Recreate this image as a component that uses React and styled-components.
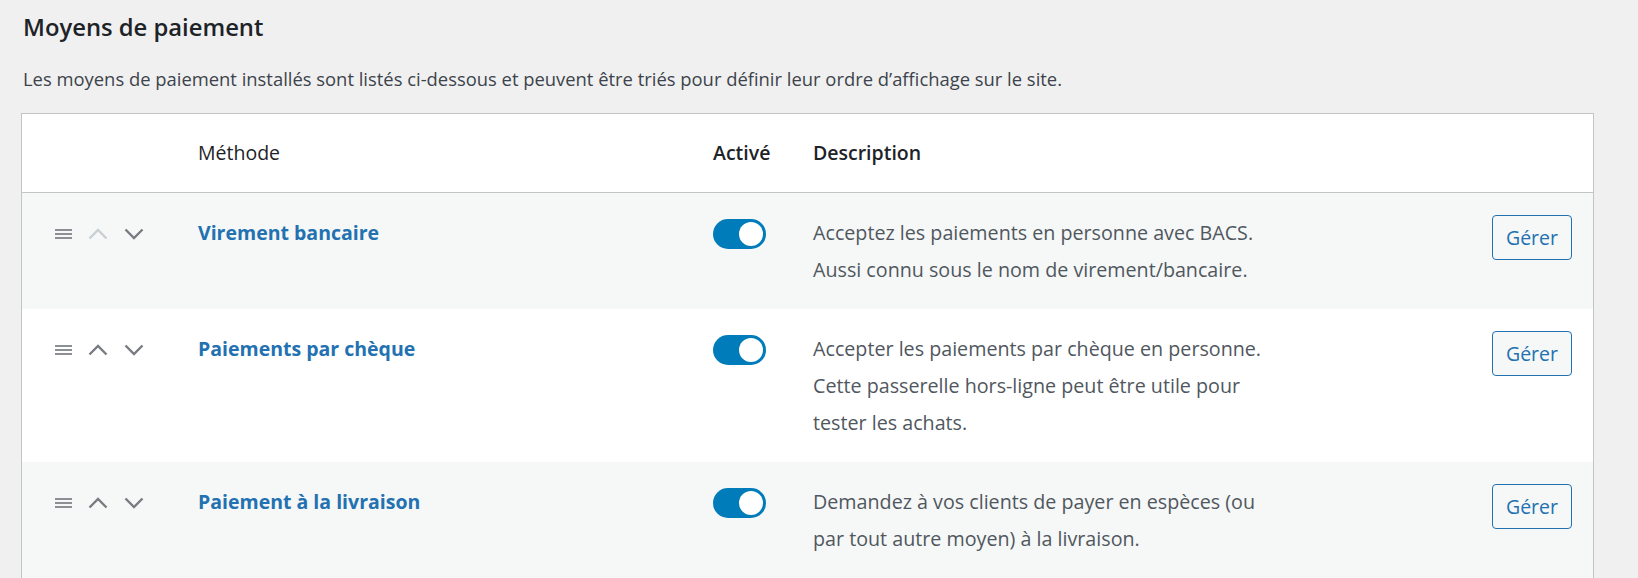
import React from "react";
import styled, { createGlobalStyle } from "styled-components";

const Global = createGlobalStyle`
  html, body { margin: 0; padding: 0; background: #f0f0f1; }
  body { font-family: "Open Sans", "Noto Sans", sans-serif; color: #3c434a; }
  * { box-sizing: border-box; }
`;

const Page = styled.div`
  padding: 11px 44px 0 21px;
`;

const Title = styled.h2`
  margin: 0 0 0 2px;
  font-size: 23.8px;
  line-height: 32px;
  font-weight: 600;
  color: #1d2327;
`;

const Intro = styled.p`
  margin: 23px 0 21px 2px;
  font-size: 18.4px;
  line-height: 26px;
  color: #3c434a;
`;

const Table = styled.div`
  width: 1573px;
  border: 1px solid #c3c4c7;
  background: #fff;
`;

const Grid = styled.div`
  display: grid;
  grid-template-columns: 176px 515px 100px 1fr 101px;
  align-items: start;
  background: ${(p) => p.$bg || "#fff"};
  border-bottom: ${(p) => (p.$head ? "1px solid #c3c4c7" : "none")};
  padding: ${(p) => (p.$head ? "26px 0 26px" : "21px 0 21px")};
`;

const Th = styled.div`
  font-size: 19.5px;
  line-height: 26px;
  font-weight: ${(p) => p.$w || 600};
  color: #1d2327;
`;

const SortCell = styled.div`
  display: flex;
  align-items: flex-start;
  gap: 16px;
  padding: 14px 0 0 33px;
  height: 37px;
`;

const Name = styled.a`
  font-size: 19.5px;
  line-height: 37px;
  font-weight: 700;
  color: #2271b1;
  text-decoration: none;
`;

const ToggleCell = styled.div`
  padding-top: 5px;
`;

const Toggle = styled.span`
  display: block;
  width: 53px;
  height: 30px;
  border-radius: 15px;
  background: #007cba;
  position: relative;
  &::after {
    content: "";
    position: absolute;
    top: 3px;
    right: 3px;
    width: 24px;
    height: 24px;
    border-radius: 50%;
    background: #fff;
  }
`;

const Desc = styled.div`
  font-size: 19.7px;
  line-height: 37px;
  color: #50575e;
  white-space: nowrap;
`;

const ManageButton = styled.button`
  margin-top: 1px;
  width: 80px;
  height: 45px;
  border: 1px solid #2271b1;
  border-radius: 4px;
  background: #f6f7f7;
  color: #2271b1;
  font-family: inherit;
  font-size: 19.5px;
  line-height: 1;
  padding: 0;
  cursor: pointer;
`;

const Handle = () => (
  <svg width="17" height="10" viewBox="0 0 17 10" style={{ marginTop: 1 }}>
    <rect x="0" y="0" width="17" height="2" fill="#8c8f94" />
    <rect x="0" y="4" width="17" height="2" fill="#8c8f94" />
    <rect x="0" y="8" width="17" height="2" fill="#8c8f94" />
  </svg>
);

const Chevron = ({ up, disabled }) => (
  <svg width="20" height="12" viewBox="0 0 20 12">
    <polyline
      points={up ? "1.5,10.5 10,2 18.5,10.5" : "1.5,1.5 10,10 18.5,1.5"}
      fill="none"
      stroke={disabled ? "#c8d0d4" : "#787c82"}
      strokeWidth="2.4"
    />
  </svg>
);

const rows = [
  {
    name: "Virement bancaire",
    lines: [
      "Acceptez les paiements en personne avec BACS.",
      "Aussi connu sous le nom de virement/bancaire.",
    ],
    first: true,
  },
  {
    name: "Paiements par chèque",
    lines: [
      "Accepter les paiements par chèque en personne.",
      "Cette passerelle hors-ligne peut être utile pour",
      "tester les achats.",
    ],
  },
  {
    name: "Paiement à la livraison",
    lines: [
      "Demandez à vos clients de payer en espèces (ou",
      "par tout autre moyen) à la livraison.",
    ],
  },
];

export default function App() {
  return (
    <>
      <Global />
      <Page>
        <Title>Moyens de paiement</Title>
        <Intro>
          Les moyens de paiement installés sont listés ci-dessous et peuvent être triés pour définir leur ordre d’affichage sur le site.
        </Intro>
        <Table>
          <Grid $head>
            <div />
            <Th $w={500}>Méthode</Th>
            <Th>Activé</Th>
            <Th>Description</Th>
            <div />
          </Grid>
          {rows.map((r, i) => (
            <Grid key={r.name} $bg={i % 2 === 0 ? "#f6f7f7" : "#fff"}>
              <SortCell>
                <Handle />
                <Chevron up disabled={r.first} />
                <Chevron />
              </SortCell>
              <div>
                <Name href="#">{r.name}</Name>
              </div>
              <ToggleCell>
                <Toggle />
              </ToggleCell>
              <Desc>
                {r.lines.map((l) => (
                  <div key={l}>{l}</div>
                ))}
              </Desc>
              <div>
                <ManageButton>Gérer</ManageButton>
              </div>
            </Grid>
          ))}
        </Table>
      </Page>
    </>
  );
}
